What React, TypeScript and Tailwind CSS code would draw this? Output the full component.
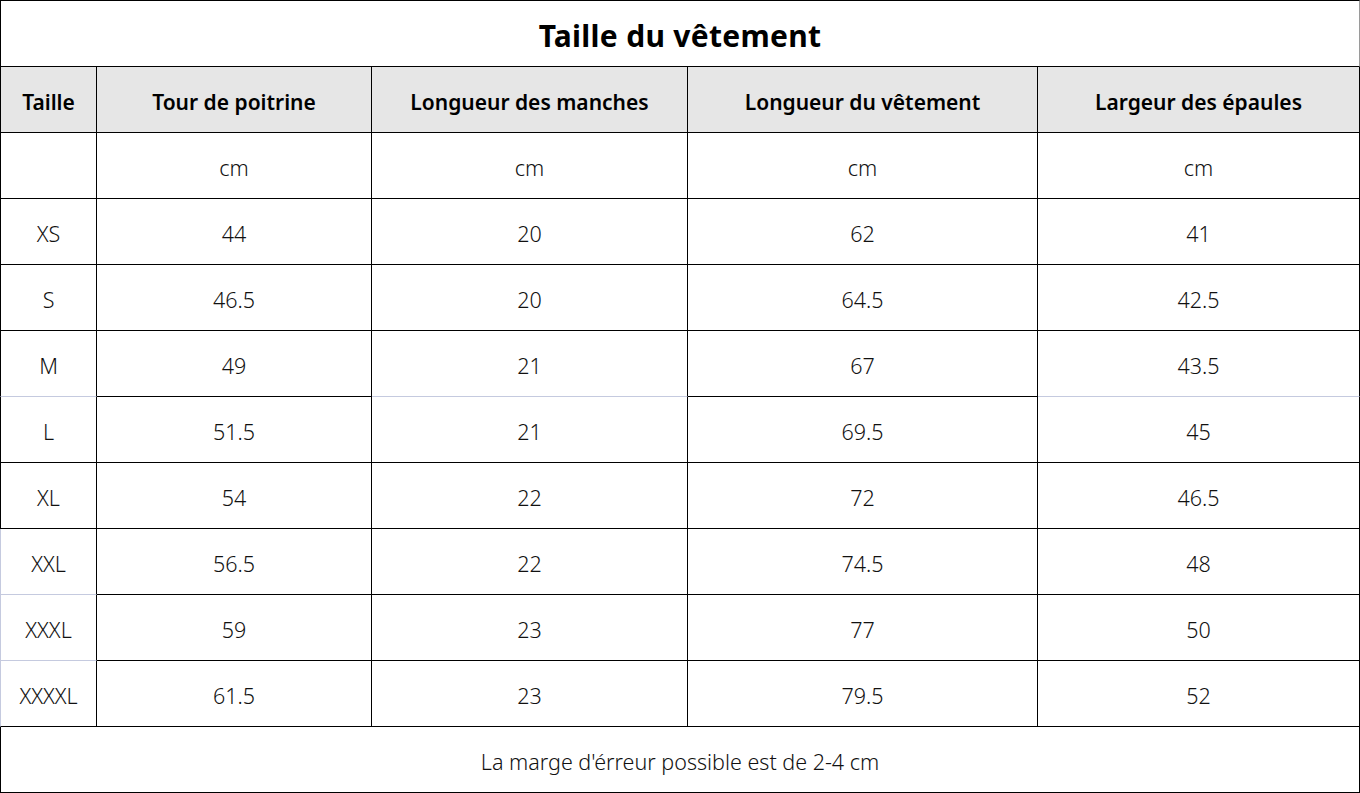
const LIGHT = "border-[#c5cadf]";

const headers = [
  "Taille",
  "Tour de poitrine",
  "Longueur des manches",
  "Longueur du vêtement",
  "Largeur des épaules",
];

const rows: string[][] = [
  ["", "cm", "cm", "cm", "cm"],
  ["XS", "44", "20", "62", "41"],
  ["S", "46.5", "20", "64.5", "42.5"],
  ["M", "49", "21", "67", "43.5"],
  ["L", "51.5", "21", "69.5", "45"],
  ["XL", "54", "22", "72", "46.5"],
  ["XXL", "56.5", "22", "74.5", "48"],
  ["XXXL", "59", "23", "77", "50"],
  ["XXXXL", "61.5", "23", "79.5", "52"],
];

// some lines in the sheet are light instead of black
function bottomLight(r: number, c: number) {
  // line between M and L
  if (r === 3 && (c === 0 || c === 2 || c === 4)) return true;
  // col 0 lines inside XXL..XXXXL
  if ((r === 6 || r === 7) && c === 0) return true;
  return false;
}

function leftLight(r: number) {
  return r >= 6;
}

export default function App() {
  return (
    <div
      className="w-[1360px] h-[793px] bg-white text-black"
      style={{ fontFamily: '"Noto Sans", "Liberation Sans", sans-serif' }}
    >
      <div className="grid grid-cols-[97px_275px_316px_350px_322px]">
        <div className="col-span-5 h-[67px] border border-black border-r-[#9a9a9a] flex items-center justify-center pt-1">
          <span className="text-[30px] font-bold tracking-[0.3px]">
            Taille du vêtement
          </span>
        </div>

        {headers.map((h, c) => (
          <div
            key={h}
            className={`h-[66px] bg-[#e6e6e6] border-b border-r border-black flex items-center justify-center pt-1.5 text-[21px] font-semibold ${
              c === 0 ? "border-l" : ""
            }`}
          >
            {h}
          </div>
        ))}

        {rows.map((row, r) =>
          row.map((v, c) => (
            <div
              key={`${r}-${c}`}
              className={`h-[66px] border-r flex items-center justify-center pt-1.5 text-[21.5px] font-light text-[#111] ${
                bottomLight(r, c) ? "border-b border-b-[#c5cadf]" : "border-b border-b-black"
              } border-r-black ${
                c === 0 ? (leftLight(r) ? `border-l ${LIGHT}` : "border-l border-l-black") : ""
              }`}
            >
              {v}
            </div>
          ))
        )}

        <div className="col-span-5 h-[66px] border-l border-r border-b border-black flex items-center justify-center pt-1.5 text-[21.5px] font-light text-[#111]">
          La marge d'érreur possible est de 2-4 cm
        </div>
      </div>
    </div>
  );
}
